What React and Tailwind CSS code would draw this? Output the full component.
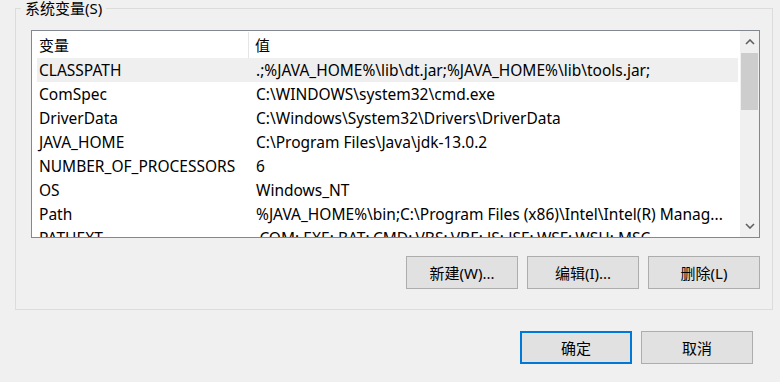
import React from 'react';

const font = { fontFamily: '"Noto Sans", "Noto Sans CJK SC", sans-serif' };

const rows = [
  ['CLASSPATH', '.;%JAVA_HOME%\\lib\\dt.jar;%JAVA_HOME%\\lib\\tools.jar;'],
  ['ComSpec', 'C:\\WINDOWS\\system32\\cmd.exe'],
  ['DriverData', 'C:\\Windows\\System32\\Drivers\\DriverData'],
  ['JAVA_HOME', 'C:\\Program Files\\Java\\jdk-13.0.2'],
  ['NUMBER_OF_PROCESSORS', '6'],
  ['OS', 'Windows_NT'],
  ['Path', '%JAVA_HOME%\\bin;C:\\Program Files (x86)\\Intel\\Intel(R) Manag...'],
  ['PATHEXT', '.COM;.EXE;.BAT;.CMD;.VBS;.VBE;.JS;.JSE;.WSF;.WSH;.MSC'],
];

const Button = ({ children, primary }) => (
  <button
    className={
      primary
        ? 'w-[112px] h-[33px] bg-[#e1e1e1] border-2 border-[#0078d7] text-[15px] leading-[20px] text-black'
        : 'w-[112px] h-[33px] bg-[#e1e1e1] border border-[#adadad] text-[15px] leading-[20px] text-black'
    }
  >
    {children}
  </button>
);

const ScrollBar = () => (
  <div className="w-[20px] flex flex-col bg-[#f0f0f0] border-l border-white">
    <div className="h-[22px] flex items-center justify-center">
      <svg width="10" height="6" viewBox="0 0 10 6">
        <path d="M1 5 L5 1 L9 5" stroke="#606060" strokeWidth="1.6" fill="none" />
      </svg>
    </div>
    <div className="h-[57px] bg-[#cdcdcd] mx-[1px]" />
    <div className="flex-1" />
    <div className="h-[22px] flex items-center justify-center">
      <svg width="10" height="6" viewBox="0 0 10 6">
        <path d="M1 1 L5 5 L9 1" stroke="#606060" strokeWidth="1.6" fill="none" />
      </svg>
    </div>
  </div>
);

const App = () => {
  return (
    <div className="w-[780px] h-[382px] bg-[#f0f0f0] overflow-hidden text-black" style={font}>
      <div className="ml-[15px] mt-[8px] w-[758px] h-[302px] border border-[#dcdcdc] relative">
        <div className="absolute -top-[11px] left-[5px] px-[4px] bg-[#f0f0f0] text-[15px] leading-[20px]">
          系统变量(S)
        </div>
        <div className="pl-[15px] pt-[21px]">
          <div className="w-[729px] h-[208px] border border-[#828790] bg-white flex overflow-hidden">
            <div className="flex-1 flex flex-col overflow-hidden">
              <div className="h-[27px] flex items-stretch text-[15px] leading-[20px] shrink-0">
                <div className="w-[217px] pl-[7px] flex items-center border-r border-[#e5e5e5] mt-[1px]">变量</div>
                <div className="flex-1 pl-[6px] flex items-center">值</div>
              </div>
              {rows.map((r, i) => (
                <div
                  key={r[0]}
                  className={
                    i === 0
                      ? 'h-[24px] shrink-0 flex items-center text-[15.5px] leading-[22px] bg-[#efefef] ml-[5px] mr-[1px]'
                      : 'h-[24px] shrink-0 flex items-center text-[15.5px] leading-[22px] ml-[5px] mr-[1px]'
                  }
                >
                  <div className="w-[212px] pl-[2px] whitespace-nowrap overflow-hidden">{r[0]}</div>
                  <div className="flex-1 pl-[7px] whitespace-nowrap overflow-hidden">{r[1]}</div>
                </div>
              ))}
            </div>
            <ScrollBar />
          </div>
        </div>
        <div className="flex justify-end gap-[9px] pr-[12px] mt-[18px]">
          <Button>新建(W)...</Button>
          <Button>编辑(I)...</Button>
          <Button>删除(L)</Button>
        </div>
      </div>
      <div className="flex justify-end gap-[9px] pr-[27px] mt-[21px]">
        <Button primary>确定</Button>
        <Button>取消</Button>
      </div>
    </div>
  );
};

export default App;
